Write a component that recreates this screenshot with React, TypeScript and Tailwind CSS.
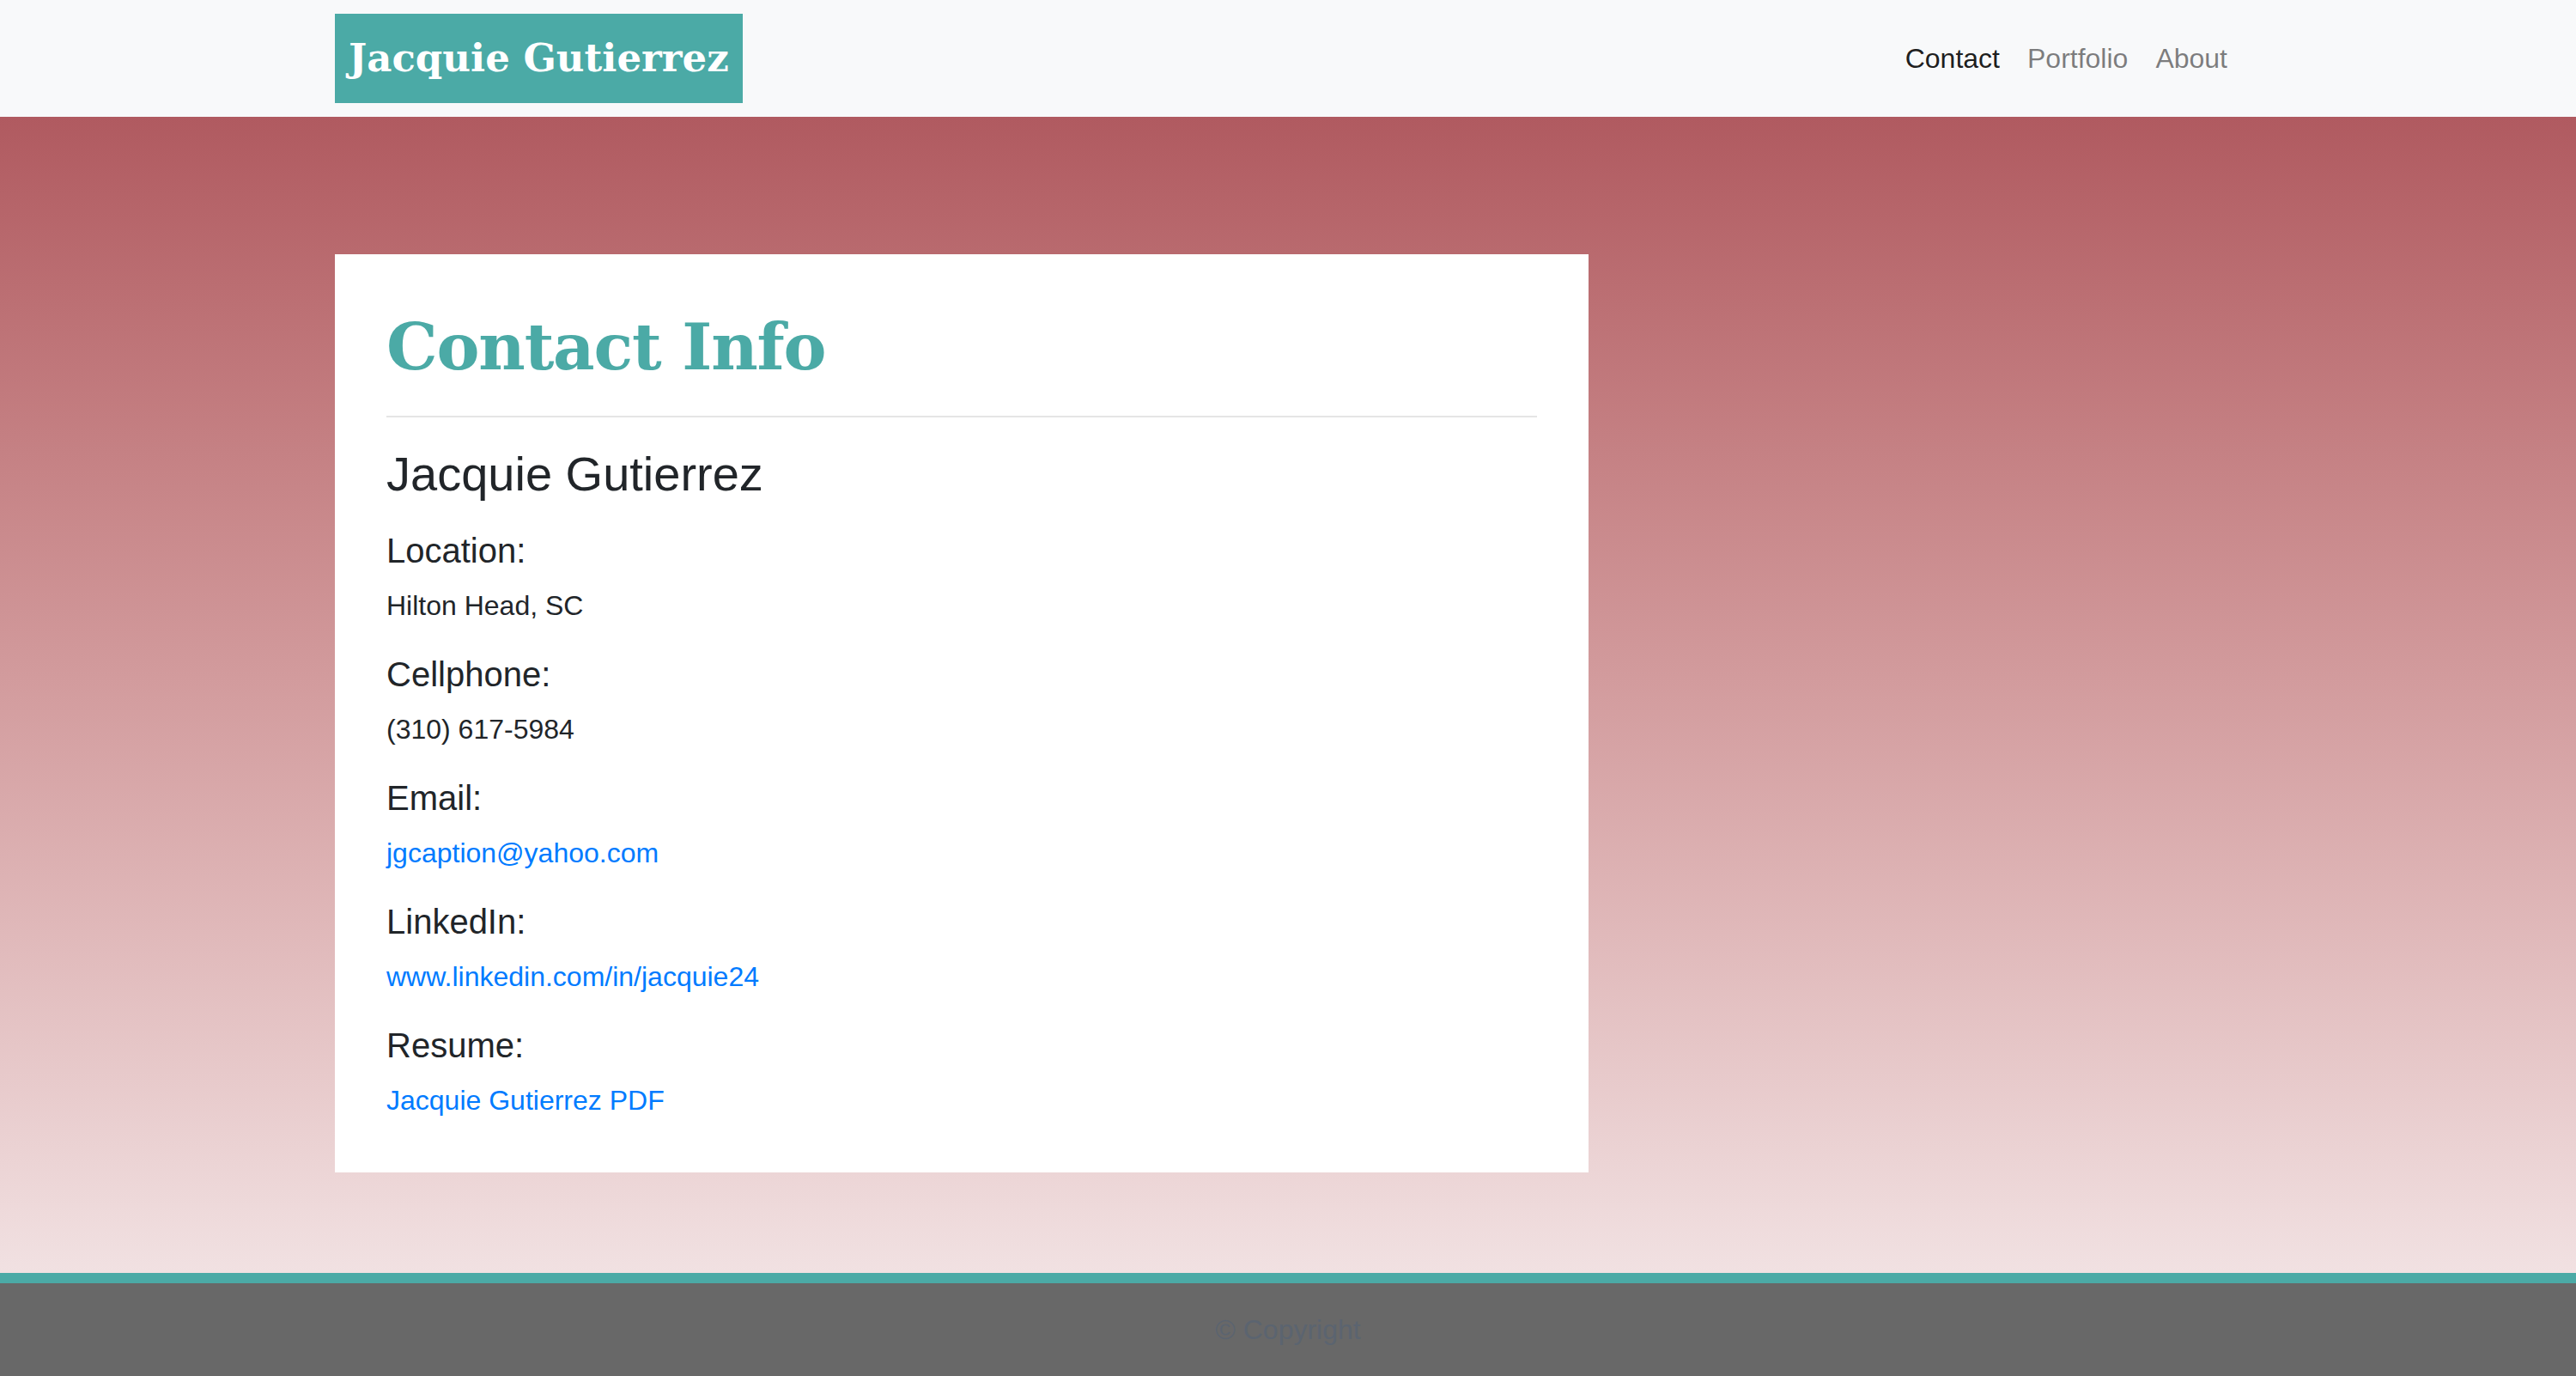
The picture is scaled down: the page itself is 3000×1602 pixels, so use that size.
export default function App() {
  const sans = "font-['Liberation_Sans',Arial,sans-serif]";

  const fields = [
    { label: "Location:", value: "Hilton Head, SC" },
    { label: "Cellphone:", value: "(310) 617-5984" },
    { label: "Email:", value: "jgcaption@yahoo.com", link: true },
    { label: "LinkedIn:", value: "www.linkedin.com/in/jacquie24", link: true },
    { label: "Resume:", value: "Jacquie Gutierrez PDF", link: true },
  ];

  return (
    <div className={`min-h-screen flex flex-col ${sans} text-[#212529]`}>
      {/* navbar */}
      <nav className="bg-[#f8f9fa] py-4">
        <div className="w-[2280px] mx-auto px-[30px] flex items-center justify-between">
          <a className="bg-[#4baaa6] h-[104px] px-4 flex items-center text-white text-[45px] font-bold font-['DejaVu_Serif',Georgia,serif]">
            Jacquie Gutierrez
          </a>
          <ul className="flex text-[32px] leading-[48px]">
            <li className="px-4 text-black/90">Contact</li>
            <li className="px-4 text-black/50">Portfolio</li>
            <li className="px-4 text-black/50">About</li>
          </ul>
        </div>
      </nav>

      {/* main */}
      <main className="flex-1 bg-gradient-to-b from-[#b05a60] to-[#f1e1e2] pt-[160px] pb-[117px]">
        <div className="w-[2280px] mx-auto flex">
          <div className="w-[1520px] px-[30px]">
            <div className="bg-white p-[60px]">
              <h1 className="font-['DejaVu_Serif',Georgia,serif] font-bold text-[75px] leading-[96px] text-[#4baaa6] tracking-[-1.2px]">
                Contact Info
              </h1>
              <hr className="mt-[32px] mb-[32px] border-0 border-t-2 border-black/10" />
              <h3 className="text-[56px] leading-[67px] mb-[32px]">Jacquie Gutierrez</h3>
              {fields.map((f, i) => (
                <div key={f.label}>
                  <h5 className="text-[40px] leading-[48px] mb-4">{f.label}</h5>
                  <p
                    className={`text-[32px] leading-[48px] ${
                      i === fields.length - 1 ? "" : "mb-8"
                    } ${f.link ? "text-[#007bff]" : ""}`}
                  >
                    {f.value}
                  </p>
                </div>
              ))}
            </div>
          </div>
        </div>
      </main>

      {/* footer */}
      <footer className="border-t-[12px] border-[#4baaa6] bg-[#686868] h-[120px] flex items-center justify-center">
        <span className="text-[32px] text-[#5b6470]">© Copyright</span>
      </footer>
    </div>
  );
}
